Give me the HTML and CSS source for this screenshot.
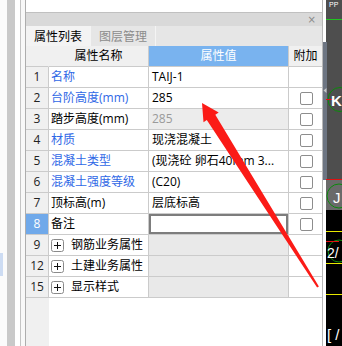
FILE: index.html
```html
<!DOCTYPE html>
<html lang="zh-CN">
<head>
<meta charset="utf-8">
<title>属性列表</title>
<link rel="stylesheet" href="styles.css">
</head>
<body>
<div class="screen">
  <div class="side">
    <div class="side-a"><div class="side-sel"></div></div>
    <div class="side-b"></div>
    <div class="side-c"></div>
    <div class="side-d"></div>
  </div>

  <div class="panel">
    <div class="panel-top"></div>
    <div class="titlebar"><span class="close">×</span></div>
    <div class="tabs">
      <div class="tab active">属性列表</div>
      <div class="tab">图层管理</div>
    </div>
    <div class="grid">
      <div class="row head">
        <div class="c num"></div>
        <div class="c name">属性名称</div>
        <div class="c val">属性值</div>
        <div class="c add">附加</div>
      </div>
      <div class="row">
        <div class="c num">1</div>
        <div class="c name blue">名称</div>
        <div class="c val">TAIJ-1</div>
        <div class="c add"></div>
      </div>
      <div class="row">
        <div class="c num">2</div>
        <div class="c name blue">台阶高度(mm)</div>
        <div class="c val">285</div>
        <div class="c add"><span class="cb"></span></div>
      </div>
      <div class="row">
        <div class="c num">3</div>
        <div class="c name">踏步高度(mm)</div>
        <div class="c val ro">285</div>
        <div class="c add"><span class="cb"></span></div>
      </div>
      <div class="row">
        <div class="c num">4</div>
        <div class="c name blue">材质</div>
        <div class="c val">现浇混凝土</div>
        <div class="c add"><span class="cb"></span></div>
      </div>
      <div class="row">
        <div class="c num">5</div>
        <div class="c name blue">混凝土类型</div>
        <div class="c val">(现浇砼 卵石40mm 3...</div>
        <div class="c add"><span class="cb"></span></div>
      </div>
      <div class="row">
        <div class="c num">6</div>
        <div class="c name blue">混凝土强度等级</div>
        <div class="c val">(C20)</div>
        <div class="c add"><span class="cb"></span></div>
      </div>
      <div class="row">
        <div class="c num">7</div>
        <div class="c name">顶标高(m)</div>
        <div class="c val">层底标高</div>
        <div class="c add"><span class="cb"></span></div>
      </div>
      <div class="row">
        <div class="c num sel">8</div>
        <div class="c name">备注</div>
        <div class="c val edit"></div>
        <div class="c add"><span class="cb"></span></div>
      </div>
      <div class="row group">
        <div class="c num">9</div>
        <div class="c name"><svg class="plus" viewBox="0 0 13 13"><rect x="0.5" y="0.5" width="12" height="12" rx="2" fill="#fff" stroke="#8a8a8a"/><path d="M3 6.5h7M6.5 3v7" stroke="#111" stroke-width="1"/></svg>钢筋业务属性</div>
        <div class="c val"></div>
        <div class="c add"></div>
      </div>
      <div class="row group">
        <div class="c num">12</div>
        <div class="c name"><svg class="plus" viewBox="0 0 13 13"><rect x="0.5" y="0.5" width="12" height="12" rx="2" fill="#fff" stroke="#8a8a8a"/><path d="M3 6.5h7M6.5 3v7" stroke="#111" stroke-width="1"/></svg>土建业务属性</div>
        <div class="c val"></div>
        <div class="c add"></div>
      </div>
      <div class="row group">
        <div class="c num">15</div>
        <div class="c name"><svg class="plus" viewBox="0 0 13 13"><rect x="0.5" y="0.5" width="12" height="12" rx="2" fill="#fff" stroke="#8a8a8a"/><path d="M3 6.5h7M6.5 3v7" stroke="#111" stroke-width="1"/></svg>显示样式</div>
        <div class="c val"></div>
        <div class="c add"></div>
      </div>
      <div class="filler"><div class="filler-num"></div></div>
    </div>
  </div>

  <div class="cad">
    <svg class="cad-svg" viewBox="323 0 19 346" width="19" height="346">
      <rect x="323" y="0" width="19" height="346" fill="#ffffff"/>
      <rect x="326" y="0" width="16" height="180" fill="#4e4e4e"/>
      <rect x="323" y="42" width="4" height="138" fill="#6d7582"/>
      <polygon points="323.5,90.5 326.5,88 326.5,93" fill="#c8c8c8"/>
      <text x="329" y="7" font-size="7" fill="#ffffff" font-family="Liberation Sans, sans-serif">PP</text>
      <line x1="326" y1="19.5" x2="342" y2="19.5" stroke="#1fc41f" stroke-width="1"/>
      <circle cx="340" cy="99.5" r="12" fill="none" stroke="#0b8a0b" stroke-width="1"/>
      <line x1="326" y1="99.5" x2="334" y2="99.5" stroke="#e01010" stroke-width="1"/>
      <text x="331" y="106" font-size="15" font-weight="bold" fill="#ffffff" font-family="Liberation Sans, sans-serif">K</text>
      <rect x="326" y="180" width="16" height="30" fill="#6a6a6a"/>
      <line x1="326" y1="179.5" x2="342" y2="179.5" stroke="#e01010" stroke-width="1"/>
      <circle cx="339" cy="196" r="12" fill="none" stroke="#0b8a0b" stroke-width="1"/>
      <text x="333" y="203" font-size="15" fill="#ffffff" font-family="Liberation Sans, sans-serif">J</text>
      <rect x="326" y="210" width="16" height="136" fill="#000000"/>
      <line x1="326" y1="231.5" x2="342" y2="231.5" stroke="#e8e800" stroke-width="1"/>
      <line x1="326" y1="263.5" x2="342" y2="263.5" stroke="#e8e800" stroke-width="1"/>
      <line x1="326" y1="294.5" x2="342" y2="294.5" stroke="#e8e800" stroke-width="1"/>
      <circle cx="339" cy="251" r="11" fill="none" stroke="#0b8a0b" stroke-width="1"/>
      <line x1="326" y1="241.5" x2="339" y2="241.5" stroke="#e01010" stroke-width="1"/>
      <text x="327" y="258" font-size="14" fill="#ffffff" font-family="Liberation Sans, sans-serif">2/</text>
      <text x="327" y="340" font-size="15" fill="#ffffff" font-family="Liberation Sans, sans-serif">[ /</text>
    </svg>
  </div>

  <svg class="arrow" viewBox="0 0 342 346" width="342" height="346">
    <polygon points="202,103 218.7,112.6 215.3,114.7 318.9,286.5 317.1,287.5 206.8,120.1 203.5,122.2" fill="#fb1b17"/>
  </svg>
</div>
</body>
</html>
```

FILE: styles.css
```css
* {
  box-sizing: border-box;
  margin: 0;
  padding: 0;
}

html,
body {
  width: 342px;
  height: 346px;
  overflow: hidden;
  background: #ffffff;
}

body {
  font-family: "Open Sans", "Noto Sans CJK SC", sans-serif;
  font-size: 12px;
  color: #000000;
}

.screen {
  position: relative;
  display: flex;
  width: 342px;
  height: 346px;
}

/* left edge of the neighbouring window */
.side {
  display: flex;
  flex: none;
  width: 25px;
}

.side-a {
  width: 7px;
  background: #fbfbfb;
}

.side-sel {
  margin-top: 253px;
  width: 3px;
  height: 23px;
  background: #cddcf3;
}

.side-b {
  width: 8px;
  background: #c9c9c9;
}

.side-c {
  width: 5px;
  background: #ffffff;
}

.side-d {
  width: 5px;
  border-left: 1px solid #c4c4c4;
  background: #f8f8f8;
}

/* properties panel */
.panel {
  flex: none;
  width: 298px;
  display: flex;
  flex-direction: column;
  border-left: 1px solid #adadad;
  border-right: 1px solid #b8b8b8;
}

.panel-top {
  height: 13px;
  background: #ffffff;
  border-bottom: 1px solid #c0c0c0;
}

.titlebar {
  height: 13px;
  background: #d9d9d9;
  display: flex;
  justify-content: flex-end;
  align-items: center;
  padding-right: 6px;
}

.close {
  font-family: "DejaVu Sans", sans-serif;
  font-size: 10px;
  line-height: 1;
  color: #8a8a8a;
}

.tabs {
  height: 20px;
  display: flex;
  background: #e6e6e6;
}

.tab {
  width: 65px;
  display: flex;
  align-items: center;
  justify-content: center;
  color: #8c8c8c;
  border-right: 1px solid #f4f4f4;
}

.tab.active {
  background: #f3f3f3;
  color: #000000;
}

.grid {
  flex: 1;
  display: flex;
  flex-direction: column;
}

.row {
  display: grid;
  grid-template-columns: 23px 100px 140px 33px;
  height: 21px;
  flex: none;
}

.c {
  display: flex;
  align-items: center;
  white-space: nowrap;
  overflow: hidden;
  line-height: 20px;
  border-right: 1px solid #cbcbcb;
  border-bottom: 1px solid #cbcbcb;
}

.num {
  justify-content: center;
  background: #f0f0f0;
  color: #222222;
}

.name {
  padding-left: 2px;
}

.val {
  padding-left: 3px;
}

.add {
  justify-content: center;
  border-right: none;
}

.head .c {
  justify-content: center;
  background: #f0f0f0;
  padding-left: 0;
}

.head .num {
  border-right-color: #f0f0f0;
}

.head .val {
  background: #79b3ef;
  color: #ffffff;
}

.blue {
  color: #2f68e6;
}

.ro {
  background: #ececec;
  color: #9a9a9a;
}

.sel {
  background: #70a9ea;
  color: #ffffff;
}

.edit {
  box-shadow: inset 0 0 0 2px #7d7d7d;
}

.cb {
  display: block;
  width: 13px;
  height: 13px;
  margin-left: 2px;
  border: 1px solid #8d8d8d;
  border-radius: 2px;
  background: #ffffff;
}

.group .val {
  background: #e9e9e9;
}

.plus {
  flex: none;
  width: 13px;
  height: 13px;
  margin-right: 7px;
}

.filler {
  flex: 1;
  display: flex;
}

.filler-num {
  width: 23px;
  background: #f0f0f0;
}

/* drawing canvas at the right */
.cad {
  flex: 1;
  overflow: hidden;
}

.cad-svg {
  display: block;
}

/* annotation arrow drawn over the screenshot */
.arrow {
  position: absolute;
  left: 0;
  top: 0;
  pointer-events: none;
}
```
